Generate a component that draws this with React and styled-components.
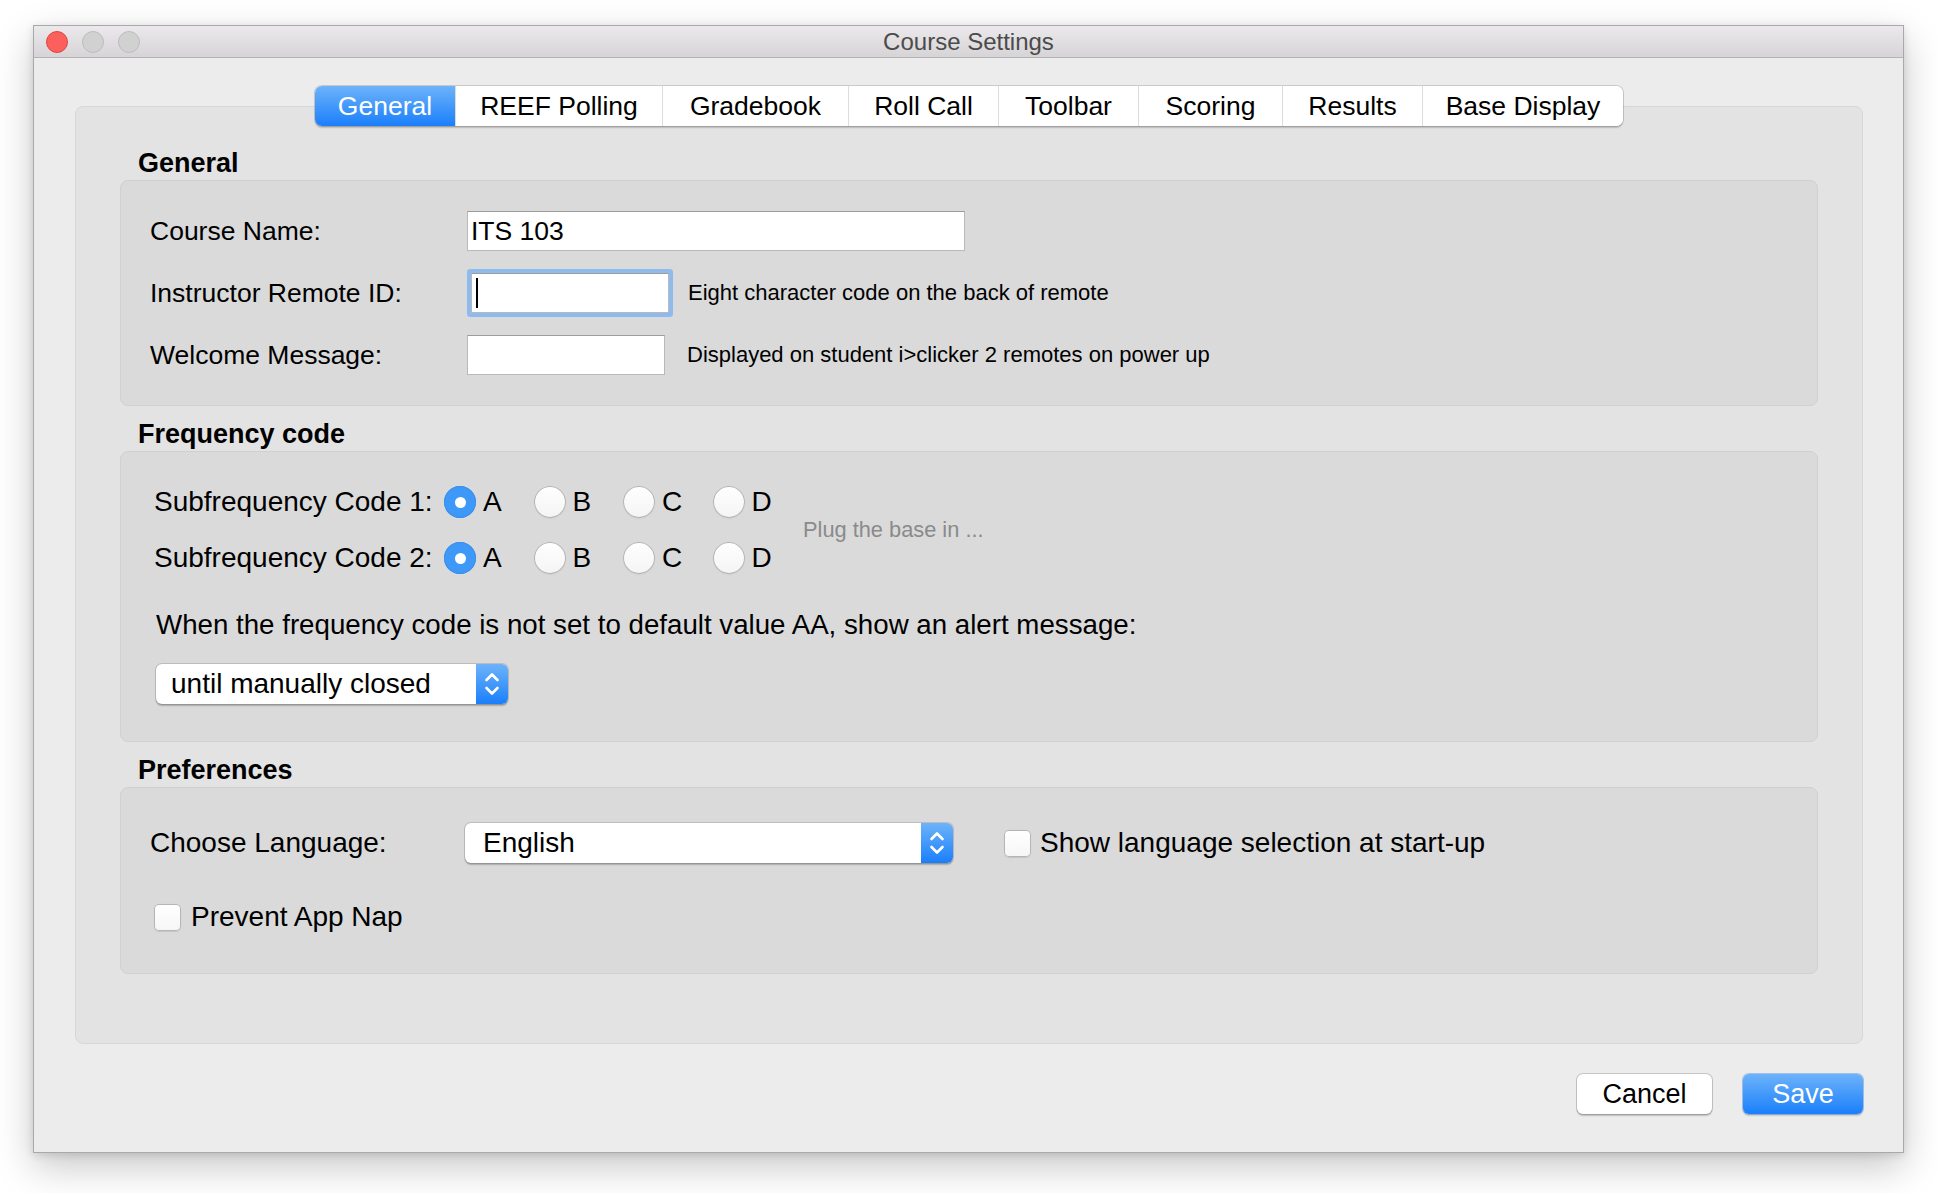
import React from 'react';
import styled, { createGlobalStyle } from 'styled-components';

const GlobalStyle = createGlobalStyle`
  html, body {
    margin: 0;
    padding: 0;
    background: #ffffff;
  }
  body {
    font-family: "Liberation Sans", Arial, sans-serif;
    color: #000;
    -webkit-font-smoothing: antialiased;
  }
  * {
    box-sizing: border-box;
  }
`;

const Page = styled.div`
  padding: 25px 0 40px 33px;
`;

const Window = styled.div`
  width: 1871px;
  background: #ececec;
  border: 1px solid #a9a9a9;
  box-shadow: 0 14px 36px rgba(0, 0, 0, 0.22), 0 2px 8px rgba(0, 0, 0, 0.12);
  display: flex;
  flex-direction: column;
`;

const TitleBar = styled.div`
  height: 32px;
  display: grid;
  grid-template-columns: 1fr auto 1fr;
  align-items: center;
  background: linear-gradient(#ebe9eb, #d6d4d6);
  border-bottom: 1px solid #b4b4b4;
`;

const Lights = styled.div`
  display: flex;
  gap: 14px;
  padding-left: 12px;
`;

const Light = styled.span`
  width: 22px;
  height: 22px;
  border-radius: 50%;
  background: ${(p) => (p.$close ? '#fc605c' : '#d2d1d2')};
  border: 1px solid ${(p) => (p.$close ? '#e0443e' : '#bdbcbd')};
`;

const Title = styled.div`
  font-size: 24px;
  color: #4b4b4b;
`;

const Body = styled.div`
  padding: 28px 40px 38px 41px;
  display: flex;
  flex-direction: column;
`;

const TabStrip = styled.div`
  display: flex;
  justify-content: center;
  position: relative;
  z-index: 1;
`;

const Tabs = styled.div`
  display: flex;
  height: 40px;
  background: #fff;
  border-radius: 7px;
  box-shadow: 0 0 0 1px rgba(0, 0, 0, 0.14), 0 1.5px 1.5px rgba(0, 0, 0, 0.18);
  overflow: hidden;
`;

const Tab = styled.div`
  width: ${(p) => p.$w}px;
  display: flex;
  align-items: center;
  justify-content: center;
  font-size: 26.5px;
  color: ${(p) => (p.$active ? '#fff' : '#000')};
  background: ${(p) => (p.$active ? 'linear-gradient(#6db3fa, #1a7ffb)' : '#fff')};
  & + & {
    border-left: 1px solid #dcdcdc;
  }
`;

const Panel = styled.div`
  margin-top: -20px;
  background: #e3e3e3;
  border: 1px solid #d7d7d7;
  border-radius: 8px;
  padding: 28px 44px 69px 44px;
`;

const Heading = styled.div`
  font-size: 27px;
  font-weight: bold;
  line-height: 30px;
  margin: 13px 0 2px 18px;
`;

const Group = styled.div`
  background: #dadada;
  border: 1px solid #d0d0d0;
  border-radius: 8px;
  padding: ${(p) => p.$pad};
  display: flex;
  flex-direction: column;
`;

const FieldRows = styled.div`
  display: flex;
  flex-direction: column;
  gap: 22px;
`;

const Row = styled.div`
  display: flex;
  align-items: center;
  height: ${(p) => p.$h || 40}px;
  margin-top: ${(p) => p.$mt || 0}px;
`;

const Label = styled.div`
  width: ${(p) => p.$w}px;
  flex-shrink: 0;
  font-size: ${(p) => p.$size || 26.5}px;
`;

const TextField = styled.div`
  width: ${(p) => p.$w}px;
  height: 40px;
  background: #fff;
  border: 1px solid #b9b9b9;
  border-top-color: #9d9d9d;
  display: flex;
  align-items: center;
  padding: 0 3px;
  font-size: 26.5px;
  ${(p) =>
    p.$focused &&
    `
    margin-left: 4px;
    box-shadow: 0 0 0 4px #8fbaee;
    border-radius: 1px;
  `}
`;

const Caret = styled.span`
  width: 2px;
  height: 30px;
  margin-left: 1px;
  background: #000;
`;

const Hint = styled.div`
  font-size: 22px;
  margin-left: ${(p) => p.$gap}px;
`;

const FreqBlock = styled.div`
  display: flex;
  align-items: center;
`;

const RadioRows = styled.div`
  display: flex;
  flex-direction: column;
  gap: 24px;
`;

const Option = styled.div`
  width: 89.5px;
  display: flex;
  align-items: center;
  gap: 7px;
  font-size: 28px;
`;

const RadioDot = styled.span`
  width: 32px;
  height: 32px;
  border-radius: 50%;
  display: flex;
  align-items: center;
  justify-content: center;
  background: ${(p) => (p.$on ? '#3d98f8' : 'linear-gradient(#ffffff, #f4f4f4)')};
  box-shadow: ${(p) =>
    p.$on ? 'inset 0 0 0 1px #3a8fec' : 'inset 0 0 0 1px #b3b3b3, 0 0.5px 1px rgba(0,0,0,0.1)'};
  &::after {
    content: '';
    display: ${(p) => (p.$on ? 'block' : 'none')};
    width: 11px;
    height: 11px;
    border-radius: 50%;
    background: #fff;
  }
`;

const GrayNote = styled.div`
  font-size: 21.8px;
  color: #8a8a8a;
  margin-left: 1px;
`;

const AlertText = styled.div`
  margin-top: 36px;
  padding-left: 2px;
  font-size: 27.7px;
  line-height: 30px;
`;

const Popup = styled.div`
  width: ${(p) => p.$w}px;
  height: 40px;
  margin: ${(p) => p.$margin || '0'};
  display: flex;
  background: #fff;
  border-radius: 6px;
  box-shadow: 0 0 0 1px rgba(0, 0, 0, 0.13), 0 1.5px 1.5px rgba(0, 0, 0, 0.22);
  flex-shrink: 0;
`;

const PopupText = styled.div`
  flex: 1;
  display: flex;
  align-items: center;
  padding-left: ${(p) => p.$pad}px;
  font-size: 28px;
`;

const PopupArrows = styled.div`
  width: 32px;
  border-radius: 0 6px 6px 0;
  background: linear-gradient(#6db3fa, #1a7ffb);
  display: flex;
  align-items: center;
  justify-content: center;
`;

const CheckRow = styled.div`
  display: flex;
  align-items: center;
  gap: ${(p) => p.$gap}px;
  margin-left: ${(p) => p.$ml}px;
  font-size: 28px;
`;

const Checkbox = styled.span`
  width: 27px;
  height: 27px;
  border-radius: 5px;
  background: linear-gradient(#ffffff, #f6f6f6);
  box-shadow: inset 0 0 0 1px #b5b5b5, 0 0.5px 1px rgba(0, 0, 0, 0.1);
`;

const Footer = styled.div`
  display: flex;
  justify-content: flex-end;
  gap: 31px;
  margin-top: 30px;
`;

const Button = styled.div`
  width: ${(p) => p.$w}px;
  height: 40px;
  border-radius: 6px;
  display: flex;
  align-items: center;
  justify-content: center;
  font-size: 27px;
  color: ${(p) => (p.$primary ? '#fff' : '#000')};
  background: ${(p) => (p.$primary ? 'linear-gradient(#6db3fa, #1a7ffb)' : '#fff')};
  box-shadow: ${(p) =>
    p.$primary
      ? '0 0 0 1px rgba(26, 110, 230, 0.35), 0 1.5px 1.5px rgba(0,0,0,0.15)'
      : '0 0 0 1px rgba(0, 0, 0, 0.16), 0 1.5px 1.5px rgba(0,0,0,0.2)'};
`;

const Arrows = () => (
  <svg width="16" height="26" viewBox="0 0 16 26" fill="none">
    <path d="M2.5 9 L8 3.5 L13.5 9" stroke="#fff" strokeWidth="2.6" strokeLinecap="round" strokeLinejoin="round" />
    <path d="M2.5 17 L8 22.5 L13.5 17" stroke="#fff" strokeWidth="2.6" strokeLinecap="round" strokeLinejoin="round" />
  </svg>
);

const tabs = [
  { name: 'General', w: 140 },
  { name: 'REEF Polling', w: 207 },
  { name: 'Gradebook', w: 186 },
  { name: 'Roll Call', w: 150 },
  { name: 'Toolbar', w: 140 },
  { name: 'Scoring', w: 144 },
  { name: 'Results', w: 140 },
  { name: 'Base Display', w: 201 },
];
const letters = ['A', 'B', 'C', 'D'];

const RadioLine = ({ label }) => (
  <Row $h={32}>
    <Label $w={290} $size={28}>{label}</Label>
    {letters.map((l) => (
      <Option key={l}>
        <RadioDot $on={l === 'A'} />
        {l}
      </Option>
    ))}
  </Row>
);

export default function App() {
  return (
    <Page>
      <GlobalStyle />
      <Window>
        <TitleBar>
          <Lights>
            <Light $close />
            <Light />
            <Light />
          </Lights>
          <Title>Course Settings</Title>
          <div />
        </TitleBar>
        <Body>
          <TabStrip>
            <Tabs>
              {tabs.map((t, i) => (
                <Tab key={t.name} $w={t.w} $active={i === 0}>{t.name}</Tab>
              ))}
            </Tabs>
          </TabStrip>
          <Panel>
            <Heading>General</Heading>
            <Group $pad="30px 30px 30px 29px">
              <FieldRows>
                <Row>
                  <Label $w={317}>Course Name:</Label>
                  <TextField $w={498}>ITS 103</TextField>
                </Row>
                <Row>
                  <Label $w={317}>Instructor Remote ID:</Label>
                  <TextField $w={198} $focused>
                    <Caret />
                  </TextField>
                  <Hint $gap={19}>Eight character code on the back of remote</Hint>
                </Row>
                <Row>
                  <Label $w={317}>Welcome Message:</Label>
                  <TextField $w={198} />
                  <Hint $gap={22}>Displayed on student i&gt;clicker 2 remotes on power up</Hint>
                </Row>
              </FieldRows>
            </Group>

            <Heading>Frequency code</Heading>
            <Group $pad="34px 30px 37px 33px">
              <FreqBlock>
                <RadioRows>
                  <RadioLine label="Subfrequency Code 1:" />
                  <RadioLine label="Subfrequency Code 2:" />
                </RadioRows>
                <GrayNote>Plug the base in ...</GrayNote>
              </FreqBlock>
              <AlertText>When the frequency code is not set to default value AA, show an alert message:</AlertText>
              <Popup $w={352} $margin="24px 0 0 2px">
                <PopupText $pad={15}>until manually closed</PopupText>
                <PopupArrows>
                  <Arrows />
                </PopupArrows>
              </Popup>
            </Group>

            <Heading>Preferences</Heading>
            <Group $pad="35px 30px 40px 29px">
              <Row>
                <Label $w={315} $size={28}>Choose Language:</Label>
                <Popup $w={488}>
                  <PopupText $pad={18}>English</PopupText>
                  <PopupArrows>
                    <Arrows />
                  </PopupArrows>
                </Popup>
                <CheckRow $gap={9} $ml={51}>
                  <Checkbox />
                  Show language selection at start-up
                </CheckRow>
              </Row>
              <Row $h={32} $mt={38}>
                <CheckRow $gap={10} $ml={4}>
                  <Checkbox />
                  Prevent App Nap
                </CheckRow>
              </Row>
            </Group>
          </Panel>
          <Footer>
            <Button $w={135}>Cancel</Button>
            <Button $w={120} $primary>Save</Button>
          </Footer>
        </Body>
      </Window>
    </Page>
  );
}
